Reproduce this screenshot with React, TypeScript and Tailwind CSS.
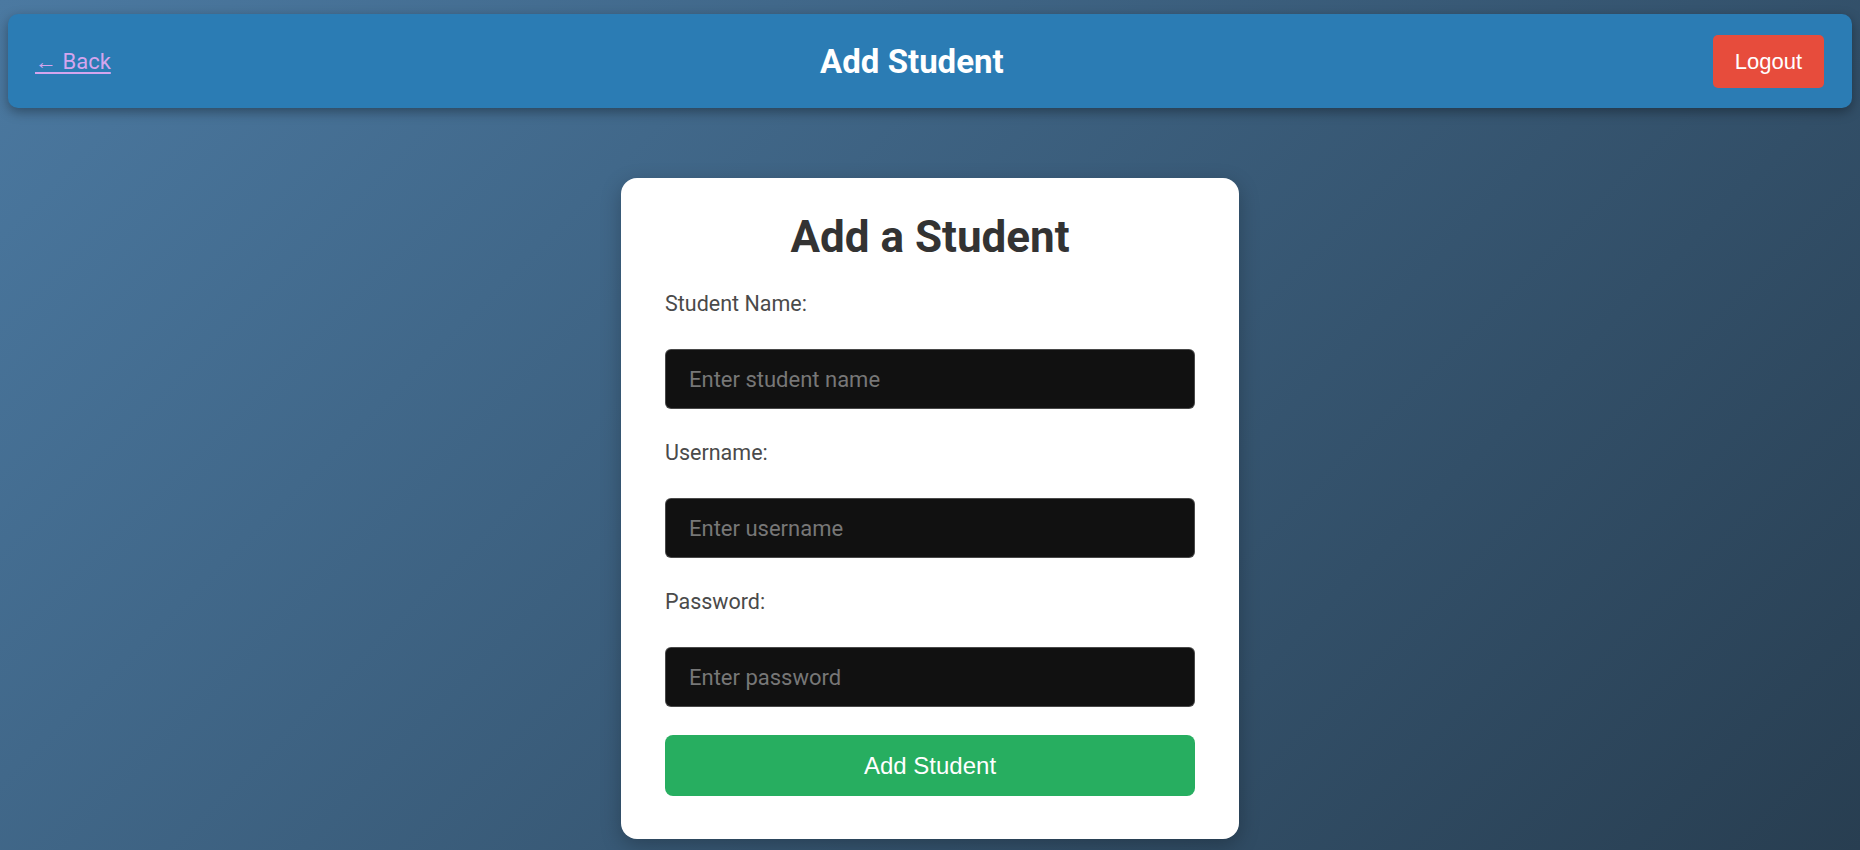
const fields = [
  { label: "Student Name:", placeholder: "Enter student name", type: "text" },
  { label: "Username:", placeholder: "Enter username", type: "text" },
  { label: "Password:", placeholder: "Enter password", type: "password" },
];

const App = () => {
  return (
    <div className="min-h-screen w-full bg-[linear-gradient(135deg,#4b79a1,#283e51)] font-['Roboto',sans-serif] pt-[14px] pb-[12px]">
      <header className="mx-2 h-[94px] flex items-center justify-between bg-[#2b7cb4] rounded-[10px] shadow-[0_4px_12px_rgba(0,0,0,0.35)] pl-[27px] pr-[28px]">
        <a href="#" className="text-[22px] text-[#d4a5ee] underline underline-offset-[3px]">
          ← Back
        </a>
        <h1 className="text-[33px] font-bold text-white leading-none">
          Add Student
        </h1>
        <button className="w-[111px] h-[53px] bg-[#e74c3c] text-white text-[22px] rounded-[5px] font-['Liberation_Sans',Arial,sans-serif]">
          Logout
        </button>
      </header>

      <div className="flex justify-center mt-[70px]">
        <form
          onSubmit={(e) => e.preventDefault()}
          className="w-[618px] bg-white rounded-[16px] shadow-[0_6px_20px_rgba(0,0,0,0.25)] px-[44px] pt-[33px] pb-[43px] flex flex-col"
        >
          <h2 className="text-[44px] leading-[52px] font-bold text-[#333] text-center mb-[28px]">
            Add a Student
          </h2>
          {fields.map((f, i) => (
            <div
              key={f.label}
              className={i === fields.length - 1 ? "flex flex-col mb-[28px]" : "flex flex-col mb-[31px]"}
            >
              <label className="text-[21.5px] leading-[26px] text-[#4a4a4a] mb-[32px]">
                {f.label}
              </label>
              <input
                type={f.type}
                placeholder={f.placeholder}
                className="h-[60px] bg-[#111] rounded-[6px] border border-[#ccc]/30 px-[23px] text-[22px] text-white placeholder:text-[#777] outline-none"
              />
            </div>
          ))}
          <button
            type="submit"
            className="h-[61px] bg-[#27ae60] text-white text-[24px] rounded-[8px] font-['Liberation_Sans',Arial,sans-serif]"
          >
            Add Student
          </button>
        </form>
      </div>
    </div>
  );
};

export default App;
